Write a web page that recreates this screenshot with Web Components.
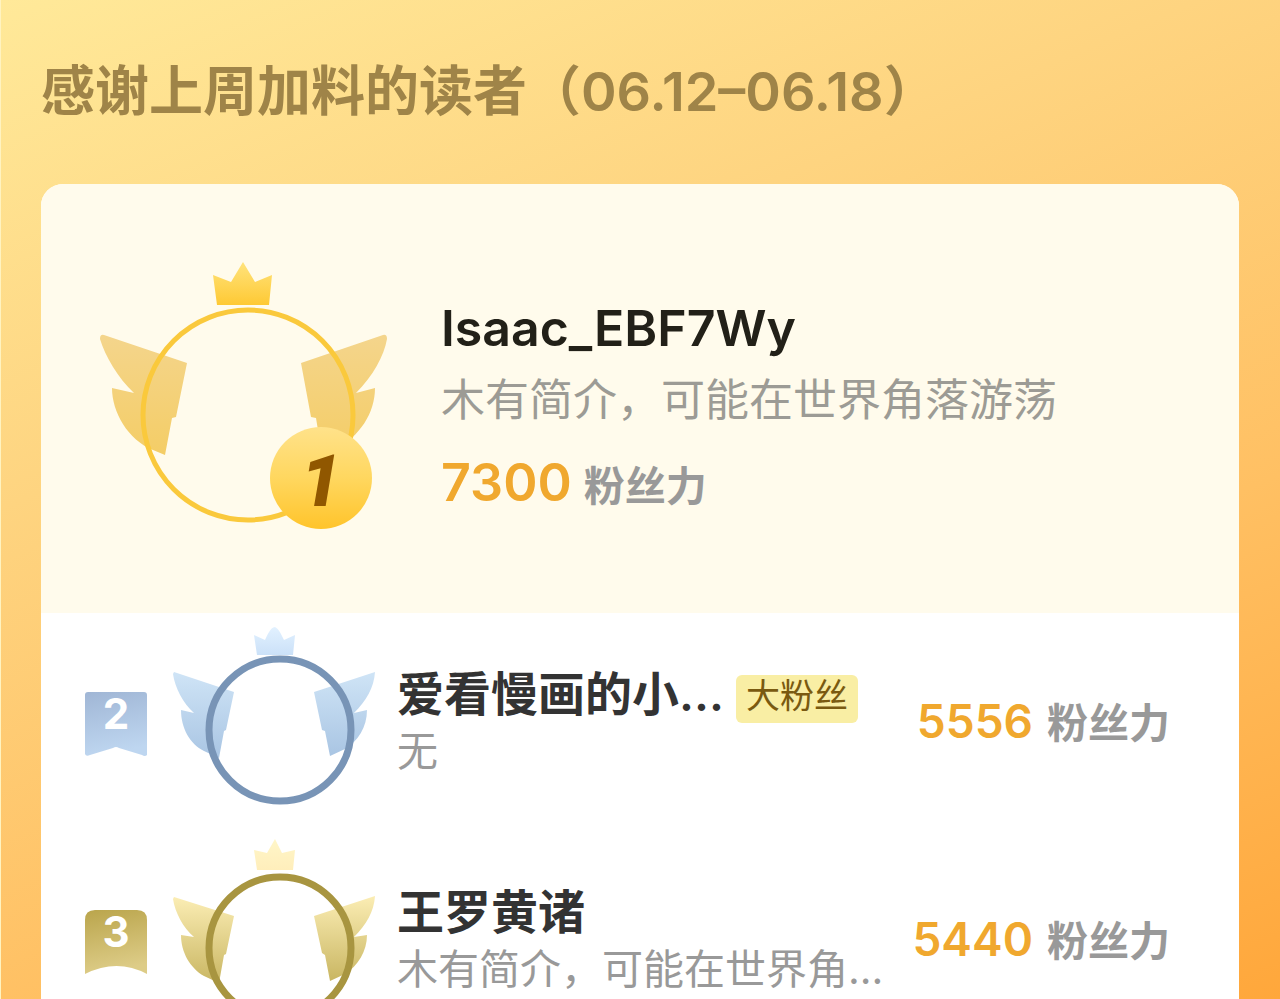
<!DOCTYPE html>
<html lang="zh-CN">
<head>
<meta charset="utf-8">
<meta name="viewport" content="width=device-width, initial-scale=1">
<title>感谢上周加料的读者</title>
<style>
    body {
        margin: 0;
        min-height: 100vh;
        font-family: Inter, 'Noto Sans CJK SC', sans-serif;
        background: linear-gradient(157deg, #ffe999 0%, #fed480 33%, #ffc063 66%, #ffa73b 100%) fixed;
    }
</style>
</head>
<body>
<fan-board>
    <span slot="title">感谢上周加料的读者（06.12–06.18）</span>
    <fan-hero>
        <span slot="name">Isaac_EBF7Wy</span>
        <span slot="intro">木有简介，可能在世界角落游荡</span>
        <span slot="power">7300</span>
    </fan-hero>
    <fan-row rank="2">
        <span slot="name">爱看慢画的小...</span>
        <fan-tag slot="tag">大粉丝</fan-tag>
        <span slot="intro">无</span>
        <span slot="power">5556</span>
    </fan-row>
    <fan-row rank="3">
        <span slot="name">王罗黄诸</span>
        <span slot="intro">木有简介，可能在世界角...</span>
        <span slot="power">5440</span>
    </fan-row>
</fan-board>

<script>
// drawings, one per rank
const wings = {
    1: `
<svg viewBox="0 0 288 268" width="288" height="268" aria-hidden="true">
    <defs>
        <linearGradient id="crown" x1="0" y1="0" x2="0" y2="1">
            <stop offset="0" stop-color="#ffe37c"/><stop offset="1" stop-color="#fec934"/>
        </linearGradient>
        <linearGradient id="wing" x1="0" y1="0" x2="0" y2="1">
            <stop offset="0" stop-color="#f4d58c"/><stop offset="1" stop-color="#f4cd66"/>
        </linearGradient>
        <linearGradient id="coin" x1="0" y1="0" x2="0" y2="1">
            <stop offset="0" stop-color="#ffe28a"/><stop offset=".5" stop-color="#ffd75f"/><stop offset="1" stop-color="#ffc42b"/>
        </linearGradient>
    </defs>
    <path fill="url(#wing)" d="M4 73 L87 101 L76 155 L72 156 L65 193 L53 188 C28 178 12 150 12 126 L34 131 C18 116 5 94 0 77 Q0 72 4 73Z"/>
    <path fill="url(#wing)" d="M283 73 L201 101 L211 155 L216 156 L222 193 L235 188 C260 174 275 151 275 126 L256 131 C273 114 284 94 287 77 Q287 72 283 73Z"/>
    <path fill="url(#crown)" d="M113 13 L131 20 L143 0 L155 20 L172 13 L169 43 L117 43Z"/>
    <circle cx="148" cy="153" r="105" fill="none" stroke="#fac93c" stroke-width="5"/>
    <circle cx="221" cy="216" r="51" fill="url(#coin)"/>
</svg>`,
    2: `
<svg viewBox="0 0 204 192" width="204" height="192" aria-hidden="true">
    <defs>
        <linearGradient id="crown" x1="0" y1="0" x2="0" y2="1">
            <stop offset="0" stop-color="#e2f1ff"/><stop offset="1" stop-color="#cbe1f8"/>
        </linearGradient>
        <linearGradient id="wing" x1="0" y1="0" x2="0" y2="1">
            <stop offset="0" stop-color="#cfe4f6"/><stop offset="1" stop-color="#a9c5e3"/>
        </linearGradient>
    </defs>
    <path fill="url(#wing)" d="M2 46 L62 66 L54 104 L52 105 L47 132 L32 125 C18 118 9 102 9 84 L22 87 C11 77 3 62 1 48Z"/>
    <path fill="url(#wing)" d="M203 46 L142 66 L150 104 L153 105 L158 130 L173 123 C186 115 195 101 195 84 L182 87 C194 75 202 62 203 46Z"/>
    <path fill="url(#crown)" d="M82 9 L93 14 C96 8 98 2 103 1 C107 3 109 8 112 14 L123 9 L121 29 L85 29Z"/>
    <circle cx="108" cy="104" r="71" fill="none" stroke="#7894b6" stroke-width="7"/>
</svg>`,
    3: `
<svg viewBox="0 0 204 192" width="204" height="192" aria-hidden="true">
    <defs>
        <linearGradient id="crown" x1="0" y1="0" x2="0" y2="1">
            <stop offset="0" stop-color="#fff6c8"/><stop offset="1" stop-color="#ffeebb"/>
        </linearGradient>
        <linearGradient id="wing" x1="0" y1="0" x2="0" y2="1">
            <stop offset="0" stop-color="#fbedb4"/><stop offset="1" stop-color="#c9b662"/>
        </linearGradient>
    </defs>
    <path fill="url(#wing)" d="M2 53 L62 72 L54 110 L52 111 L47 139 L32 132 C18 124 9 108 9 91 L22 93 C11 84 3 68 1 55Z"/>
    <path fill="url(#wing)" d="M203 52 L142 72 L150 109 L153 111 L158 137 L173 130 C186 122 195 107 195 91 L182 93 C194 81 202 68 203 52Z"/>
    <path fill="url(#crown)" d="M82 6 L95 9 L103 -5 L110 9 L123 6 L121 26 L85 26Z"/>
    <circle cx="108" cy="104" r="71" fill="none" stroke="#a89540" stroke-width="7"/>
</svg>`
};

const ribbons = {
    2: `
<svg viewBox="0 0 62 64" width="62" height="64" aria-hidden="true">
    <defs><linearGradient id="g" x1="0" y1="0" x2=".2" y2="1">
        <stop offset="0" stop-color="#a0b6d5"/><stop offset="1" stop-color="#bed6f0"/>
    </linearGradient></defs>
    <path fill="url(#g)" d="M3 0 H59 Q62 0 62 3 V63 Q60 65 57 63 L34 56 Q31 54 28 56 L5 63 Q1 65 0 62 V3 Q0 0 3 0Z"/>
</svg>`,
    3: `
<svg viewBox="0 0 62 64" width="62" height="64" aria-hidden="true">
    <defs><linearGradient id="g" x1="0" y1="0" x2=".2" y2="1">
        <stop offset="0" stop-color="#baa54c"/><stop offset="1" stop-color="#ddcc87"/>
    </linearGradient></defs>
    <path fill="url(#g)" d="M10 0 H52 Q62 0 62 10 V64 Q32 48 0 64 V10 Q0 0 10 0Z"/>
</svg>`
};

class FanBoard extends HTMLElement {
    connectedCallback() {
        this.root = this.attachShadow({ mode: 'open' });
        this.root.innerHTML = `
<style>
    :host {
        display: block;
        padding: 50px 41px 0 40px;
        border-left: 1px solid #fff3c0;
    }
    h1 {
        margin: 0 0 50px;
        font-size: 54px;
        line-height: 84px;
        font-weight: 600;
        color: #9f8448;
    }
    section {
        background: #fff;
        border-radius: 22px 22px 0 0;
        overflow: hidden;
    }
</style>
<h1><slot name="title"></slot></h1>
<section><slot></slot></section>
`;
    }
}

class FanHero extends HTMLElement {
    connectedCallback() {
        this.root = this.attachShadow({ mode: 'open' });
        this.root.innerHTML = `
<style>
    :host {
        display: flex;
        gap: 53px;
        padding: 78px 59px 83px;
        background: #fffbec;
    }
    .avatar {
        position: relative;
        flex: none;
        height: 268px;
    }
    .rank {
        position: absolute;
        right: 16px;
        bottom: 0;
        width: 102px;
        line-height: 96px;
        text-align: center;
        font-family: Roboto, sans-serif;
        font-size: 72px;
        font-weight: 900;
        font-style: italic;
        color: #905700;
    }
    .info {
        padding-top: 32px;
    }
    h2, p {
        margin: 0;
    }
    h2 {
        margin-bottom: 2px;
        font-size: 50px;
        line-height: 68px;
        font-weight: 600;
        color: #222018;
    }
    p {
        font-size: 44px;
        line-height: 72px;
        color: #9c9b95;
    }
    fan-power {
        --size: 52px;
        gap: 12px;
        margin-top: 8px;
    }
</style>
<div class="avatar">${wings[1]}<span class="rank">1</span></div>
<div class="info">
    <h2><slot name="name"></slot></h2>
    <p><slot name="intro"></slot></p>
    <fan-power><slot name="power"></slot></fan-power>
</div>
`;
    }
}

class FanRow extends HTMLElement {
    connectedCallback() {
        const rank = this.getAttribute('rank');
        this.root = this.attachShadow({ mode: 'open' });
        this.root.innerHTML = `
<style>
    :host {
        display: flex;
        align-items: center;
        height: 218px;
        padding: 0 69px 0 44px;
    }
    svg {
        display: block;
        overflow: visible;
    }
    .ribbon {
        position: relative;
        flex: none;
        margin: 4px 25px 0 0;
    }
    .rank {
        position: absolute;
        inset: 0;
        text-align: center;
        font-size: 42px;
        line-height: 44px;
        font-weight: 700;
        color: #fff;
    }
    .avatar {
        flex: none;
        margin-right: 21px;
    }
    .info {
        flex: 1;
        min-width: 0;
        padding-bottom: 6px;
    }
    .line {
        display: flex;
        align-items: center;
        gap: 12px;
    }
    h2, p {
        margin: 0;
        white-space: nowrap;
    }
    h2 {
        font-size: 47px;
        line-height: 64px;
        font-weight: 600;
        color: #333;
    }
    p {
        font-size: 41px;
        line-height: 50px;
        color: #999;
    }
    fan-power {
        --size: 46px;
    }
</style>
<div class="ribbon">${ribbons[rank]}<span class="rank">${rank}</span></div>
<div class="avatar">${wings[rank]}</div>
<div class="info">
    <div class="line"><h2><slot name="name"></slot></h2><slot name="tag"></slot></div>
    <p><slot name="intro"></slot></p>
</div>
<fan-power><slot name="power"></slot></fan-power>
`;
    }
}

class FanTag extends HTMLElement {
    connectedCallback() {
        this.root = this.attachShadow({ mode: 'open' });
        this.root.innerHTML = `
<style>
    :host {
        margin-top: 10px;
        padding: 0 10px 6px;
        border-radius: 6px;
        font-size: 34px;
        line-height: 42px;
        color: #7a5a10;
        background: #f9eea4;
    }
</style>
<slot></slot>
`;
    }
}

class FanPower extends HTMLElement {
    connectedCallback() {
        this.root = this.attachShadow({ mode: 'open' });
        this.root.innerHTML = `
<style>
    :host {
        display: flex;
        align-items: baseline;
        gap: 14px;
        line-height: 78px;
        white-space: nowrap;
    }
    b {
        font-size: var(--size);
        font-weight: 600;
        color: #f0a82e;
    }
    span {
        font-size: 41px;
        font-weight: 600;
        color: #999;
    }
</style>
<b><slot></slot></b><span>粉丝力</span>
`;
    }
}

customElements.define('fan-board', FanBoard);
customElements.define('fan-hero', FanHero);
customElements.define('fan-row', FanRow);
customElements.define('fan-tag', FanTag);
customElements.define('fan-power', FanPower);
</script>
</body>
</html>
